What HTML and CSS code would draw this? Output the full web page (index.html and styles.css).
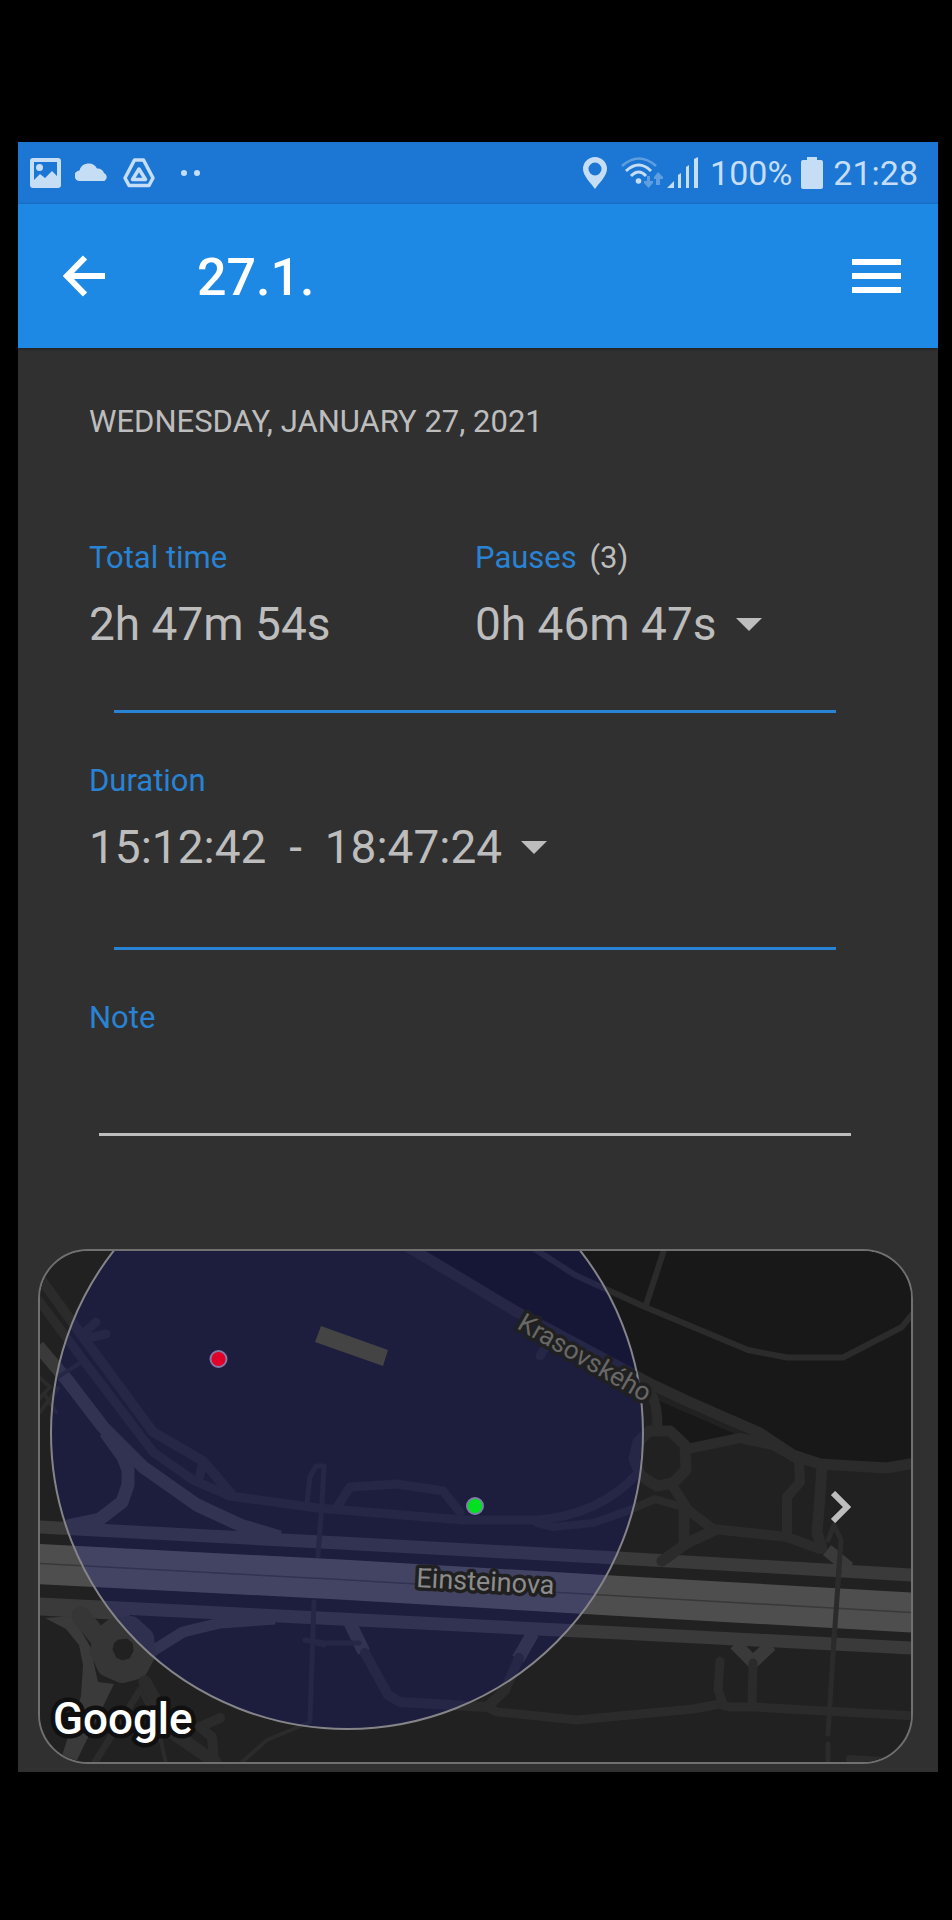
FILE: index.html
```html
<!DOCTYPE html>
<html lang="en">
<head>
<meta charset="utf-8">
<meta name="viewport" content="width=device-width, initial-scale=1">
<title>27.1.</title>
<link rel="stylesheet" href="styles.css">
</head>
<body>
<div class="screen">
  <div class="status-bar">
    <div class="status-left">
      <svg width="31" height="30" viewBox="0 0 31 30" aria-hidden="true"><path fill="currentColor" fill-rule="evenodd" d="M3 0H28Q31 0 31 3V27Q31 30 28 30H3Q0 30 0 27V3Q0 0 3 0ZM4 4V22L10 16L15 20L22 13L27 18V4Z"/><circle cx="9.500" cy="9.500" r="3.500" fill="currentColor"/></svg>
      <svg width="34" height="30" viewBox="0 0 34 30" aria-hidden="true"><path fill="currentColor" d="M5 23A5 5 0 0 1 4.500 12.500A9.500 9.500 0 0 1 22 10.500A7 7 0 0 1 29 15A4.500 4.500 0 0 1 29.500 23Z"/></svg>
      <svg width="32" height="30" viewBox="0 0 32 30" fill="none" stroke="currentColor" stroke-linejoin="round" aria-hidden="true"><path stroke-width="3.500" d="M11.500 2H20.500L30 20L26 27.500H6L2 20Z"/><path stroke-width="3.500" d="M16 11L22.500 21.500H9.500Z"/></svg>
      <svg class="more-dots" width="19" height="6" viewBox="0 0 19 6" fill="currentColor" aria-hidden="true"><circle cx="3" cy="3" r="3"/><circle cx="16" cy="3" r="3"/></svg>
    </div>
    <div class="status-right">
      <svg width="24" height="32" viewBox="0 0 24 32" aria-hidden="true"><path fill="currentColor" fill-rule="evenodd" d="M12 0A12 12 0 0 1 24 12C24 19 16 26 12 32C8 26 0 19 0 12A12 12 0 0 1 12 0ZM12 5.500A6.500 6.500 0 1 0 12 18.500A6.500 6.500 0 1 0 12 5.500Z"/></svg>
      <svg class="wifi" width="42" height="32" viewBox="0 0 42 32" fill="none" stroke="currentColor" aria-hidden="true"><path opacity=".4" stroke-width="2.500" d="M1 9Q18 -6 35 9"/><path stroke-width="3" d="M5 14Q18 2 30 14"/><path stroke-width="3" d="M10 19Q18 11 25 19"/><circle cx="17.500" cy="24" r="2.800" fill="currentColor" stroke="none"/><g opacity=".4" fill="currentColor" stroke="none"><path d="M26 19H29V24H32V26L27.500 31L23 26V24H26Z"/><path d="M35 28H39V22H42V20L37 15L33 20V22H35Z"/></g></svg>
      <svg class="signal" width="31" height="32" viewBox="0 0 31 32" fill="currentColor" aria-hidden="true"><path d="M0 31L7 24V31ZM11 18L14 16V31H11ZM19 10L22 8V31H19ZM27 2L31 0V31H27Z"/></svg>
      <span class="battery-level">100%</span>
      <svg class="battery" width="22" height="32" viewBox="0 0 22 32" fill="currentColor" aria-hidden="true"><path d="M6 0H16V3H20Q22 3 22 5V30Q22 32 20 32H2Q0 32 0 30V5Q0 3 2 3H6Z"/></svg>
      <time>21:28</time>
    </div>
  </div>

  <header class="app-bar">
    <button class="icon-button" type="button" aria-label="Back"><svg width="42" height="42" viewBox="0 0 42 42" fill="none" stroke="currentColor" stroke-width="6" aria-hidden="true"><path d="M42 21H5M22 2.500L4 21L22 39.500"/></svg></button>
    <h1>27.1.</h1>
    <button class="icon-button" type="button" aria-label="Menu"><svg width="49" height="34" viewBox="0 0 49 34" fill="currentColor" aria-hidden="true"><path d="M0 0H49V6H0ZM0 14H49V20H0ZM0 28H49V34H0Z"/></svg></button>
  </header>

  <main>
    <div class="details">
      <p class="date">WEDNESDAY, JANUARY 27, 2021</p>
      <div class="columns">
        <section>
          <h2 class="label">Total time</h2>
          <p class="value">2h 47m 54s</p>
        </section>
        <section>
          <h2 class="label" id="pauses">Pauses <span class="count">(3)</span></h2>
          <button class="value" type="button" aria-describedby="pauses">0h 46m 47s<span class="caret"></span></button>
        </section>
      </div>
      <hr class="divider">
      <section>
        <h2 class="label" id="duration">Duration</h2>
        <button class="value" type="button" aria-describedby="duration">15:12:42  -  18:47:24<span class="caret"></span></button>
      </section>
      <hr class="divider divider-low">
      <label class="label" for="note">Note</label>
      <input class="note" id="note" type="text">
    </div>

    <div class="map">
      <svg class="map-drawing" viewBox="40 1251 871 511" role="img" aria-label="Map">
        <rect x="40" y="1251" width="871" height="511" fill="#212121"/>
        <path fill="#181818" d="M413 1250L517 1312L653 1385L760 1433L793 1455L820 1464L887 1468L912 1463V1250Z"/>
        <path fill="#181818" d="M657 1400L740 1436L690 1447L672 1432L660 1430Z"/>
        <g fill="none" stroke-linejoin="round">
          <g stroke="#3a3a3a" stroke-width="13">
            <path d="M38 1346L67 1380L103 1427L143 1467L197 1505L240 1525L280 1537"/>
            <path d="M105 1432L123 1457L128 1470V1485L122 1502L100 1519L67 1526"/>
            <path d="M350 1623L364 1652M533 1633L518 1659"/>
            <path d="M735 1644L753 1662L771 1645M827 1550L849 1568"/>
            <path d="M151 1652L183 1632L220 1623L275 1619" stroke-width="11"/>
            <path d="M38 1527L340 1543L617 1558L912 1575"/>
            <path d="M38 1604L340 1619L620 1633L912 1648"/>
            <path d="M38 1607L130 1612" stroke-width="17"/>
          </g>
          <path fill="#3a3a3a" d="M45 1618L72 1616L90 1646L98 1682L114 1684L76 1762H60L81 1696L83 1665L79 1645L66 1629Z"/>
          <path stroke="#363636" stroke-width="19" stroke-linecap="round" d="M81 1616L103 1643"/>
          <path stroke="#363636" stroke-width="22" d="M114 1629L131 1627L143 1638L145 1653L137 1668L122 1672L108 1666L101 1651L104 1637Z"/>
          <g stroke="#2b2b2b" stroke-width="10" stroke-linecap="round">
            <path d="M410 1248L517 1312L653 1385L687 1401L760 1433L793 1455L820 1464L887 1468L915 1463" stroke-width="11"/>
            <path d="M530 1246L575 1275L610 1291L645 1307L748 1350L787 1357.500H843L902 1327L914 1312" stroke-width="6"/>
            <path d="M665 1247L646 1305" stroke-width="6"/>
            <path d="M540 1356L546 1346" stroke-width="9"/>
            <path d="M38 1275L83 1337L153 1432L203 1461L232 1495"/>
            <path d="M36 1297L87 1365L153 1452L193 1480L230 1496L317 1508L463 1520H537Q600 1515 638 1473" stroke-width="9"/>
            <path d="M203 1461L199 1480M82 1335L96 1322M88 1338L106 1334" stroke-width="9"/>
            <path d="M58 1377L80 1363M40 1378L50 1387L38 1400M40 1412L58 1388M45 1395L56 1412" stroke-width="4"/>
            <path d="M537 1523L553 1527L593 1523L630 1510L655 1499L682 1507" stroke-width="8"/>
            <path d="M336 1509L350 1487L397 1484L443 1491L460 1512" stroke-width="9"/>
            <path d="M307 1503L310 1477L316 1466H324L322 1503L318 1556M314 1602L310 1720" stroke-width="5"/>
            <path d="M305 1640L325 1643L359 1643M306 1640L324 1645" stroke-width="5"/>
            <path d="M365 1653L388 1695L400 1702L487 1707L505 1690L519 1658"/>
            <path d="M487 1707L497 1712L577 1720L693 1709L720 1704L730 1707H753L914 1716" stroke-width="9"/>
            <path d="M720 1661L718 1690L724 1706M753 1663L752 1704" stroke-width="9"/>
            <path d="M648 1388Q659 1405 657 1430"/>
            <path d="M649 1431H670L685 1445L686 1470L673 1483L657 1486L641 1476L634 1459L638 1442Z" stroke-width="11"/>
            <path d="M687 1449L740 1438L773 1445L799 1460L800 1482L787 1497V1535" stroke-width="10"/>
            <path d="M822 1466L819 1510L817 1533L822 1548" stroke-width="11"/>
            <path d="M672 1485L688 1510L713 1529L787 1537L820 1549"/>
            <path d="M684 1510V1542M713 1531L687 1543L662 1561" stroke-width="11"/>
            <path d="M828 1540L834 1525L841 1540L835 1623L830 1703L828 1734" stroke-width="5"/>
            <path d="M828 1744V1765" stroke-width="5"/>
            <path d="M850 1759L914 1763" stroke-width="8"/>
            <path d="M145 1682L173 1733L215 1762" stroke-width="13"/>
            <path d="M220 1718L200 1727L212 1737L214 1762"/>
            <path d="M140 1690L95 1762" stroke-width="7"/>
            <path d="M140 1690L157 1723L166 1764M240 1764L267 1740L310 1722" stroke-width="4"/>
          </g>
          <path stroke="#4e4e4e" stroke-width="40" d="M38 1564L340 1579.500L620 1596L912 1612.500"/>
          <path stroke="#393939" stroke-width="1.500" d="M38 1563.500L340 1579.500L620 1596L912 1612.500"/>
          <path stroke="#2b2b2b" stroke-width="5" d="M839 1570L834 1640"/>
        </g>
        <circle cx="347" cy="1433" r="296" fill="rgb(13,13,220)" fill-opacity=".155" stroke="#858589" stroke-width="2"/>
        <path fill="#444444" d="M321 1326L388 1350L383 1366L315 1342Z"/>
        <circle cx="218.500" cy="1359" r="8" fill="#e10028" stroke="#8878a4" stroke-width="2"/>
        <circle cx="475" cy="1506" r="8" fill="#00e220" stroke="#7b82a4" stroke-width="2"/>
        <text class="street street-minor" transform="translate(516 1328) rotate(30)">Krasovského</text>
        <text class="street" transform="translate(416 1587) rotate(3)">Einsteinova</text>
        <text class="map-logo" x="53" y="1734">Google</text>
      </svg>
      <button class="map-open" type="button" aria-label="Open map"><svg width="20" height="32" viewBox="0 0 20 32" fill="none" stroke="currentColor" stroke-width="6" aria-hidden="true"><path d="M2 2L16 16L2 30"/></svg></button>
    </div>
  </main>
</div>
</body>
</html>
```

FILE: styles.css
```css
* {
  box-sizing: border-box;
}

body {
  margin: 0;
  padding: 142px 14px 148px 18px;
  background: #000;
  color: #bdbdbd;
  font-family: Roboto, "Liberation Sans", sans-serif;
}

h1,
h2,
p {
  margin: 0;
  font-weight: 400;
}

button {
  padding: 0;
  border: 0;
  background: none;
  color: inherit;
  font: inherit;
}

svg {
  display: block;
  flex: none;
}

.screen {
  background: #303030;
}

.status-bar {
  display: flex;
  justify-content: space-between;
  height: 62px;
  padding: 0 20px 0 12px;
  background: #1b76d4;
  color: #c5ddf5;
  font-size: 34px;
  line-height: 64px;
}

.status-left,
.status-right {
  display: flex;
  align-items: center;
}

.status-left {
  gap: 14px;
}

.more-dots {
  margin-left: 12px;
}

.wifi {
  margin-left: 14px;
}

.signal {
  margin-left: 4px;
}

.battery-level {
  margin-left: 12px;
}

.battery {
  margin: 0 10px 0 9px;
}

.app-bar {
  display: flex;
  align-items: center;
  height: 144px;
  padding: 0 37px 0 45px;
  background: #1e88e5;
  box-shadow: 0 1px 3px rgba(0, 0, 0, 0.4);
  color: #fff;
}

.app-bar h1 {
  flex: 1;
  padding: 4px 0 0 92px;
  font-size: 52px;
  font-weight: 500;
  line-height: 64px;
}

.details {
  padding: 54px 71px 0;
}

.date,
.label {
  display: block;
  font-size: 31px;
  line-height: 40px;
}

.date {
  margin-bottom: 96px;
}

.label {
  color: #2983d4;
}

.count {
  margin-left: 5px;
  color: #bdbdbd;
}

.columns {
  display: grid;
  grid-template-columns: 386fr 392fr;
}

.value {
  display: flex;
  align-items: center;
  margin-top: 16px;
  font-size: 46px;
  line-height: 60px;
  white-space: pre;
}

.caret {
  margin-left: 19px;
  border: 13px solid transparent;
  border-top-color: currentColor;
  border-bottom: 0;
}

.divider {
  height: 3px;
  margin: 56px 31px 48px 25px;
  border: 0;
  background: #2983d4;
}

.divider-low {
  margin-top: 70px;
}

.note {
  display: block;
  width: calc(100% - 26px);
  height: 98px;
  margin-left: 10px;
  padding: 16px 0;
  border: 0;
  border-bottom: 3px solid #bdbdbd;
  border-radius: 0;
  outline: 0;
  background: transparent;
  color: inherit;
  font: inherit;
  font-size: 46px;
}

.map {
  position: relative;
  margin: 113px 25px 0 20px;
  overflow: hidden;
  border: 2px solid #707070;
  border-radius: 50px;
}

main {
  padding-bottom: 8px;
}

.map-drawing {
  width: 100%;
  height: auto;
}

.street {
  fill: #8c8c8c;
  stroke: #202020;
  stroke-width: 7px;
  stroke-linejoin: round;
  paint-order: stroke;
  font-size: 27px;
}

.street-minor {
  fill: #686868;
  font-size: 26px;
}

.map-logo {
  fill: #fff;
  stroke: #101010;
  stroke-width: 9px;
  stroke-linejoin: round;
  paint-order: stroke;
  font-size: 44px;
  font-weight: 500;
}

.map-open {
  position: absolute;
  top: 50%;
  right: 60px;
  transform: translateY(-50%);
}
```
